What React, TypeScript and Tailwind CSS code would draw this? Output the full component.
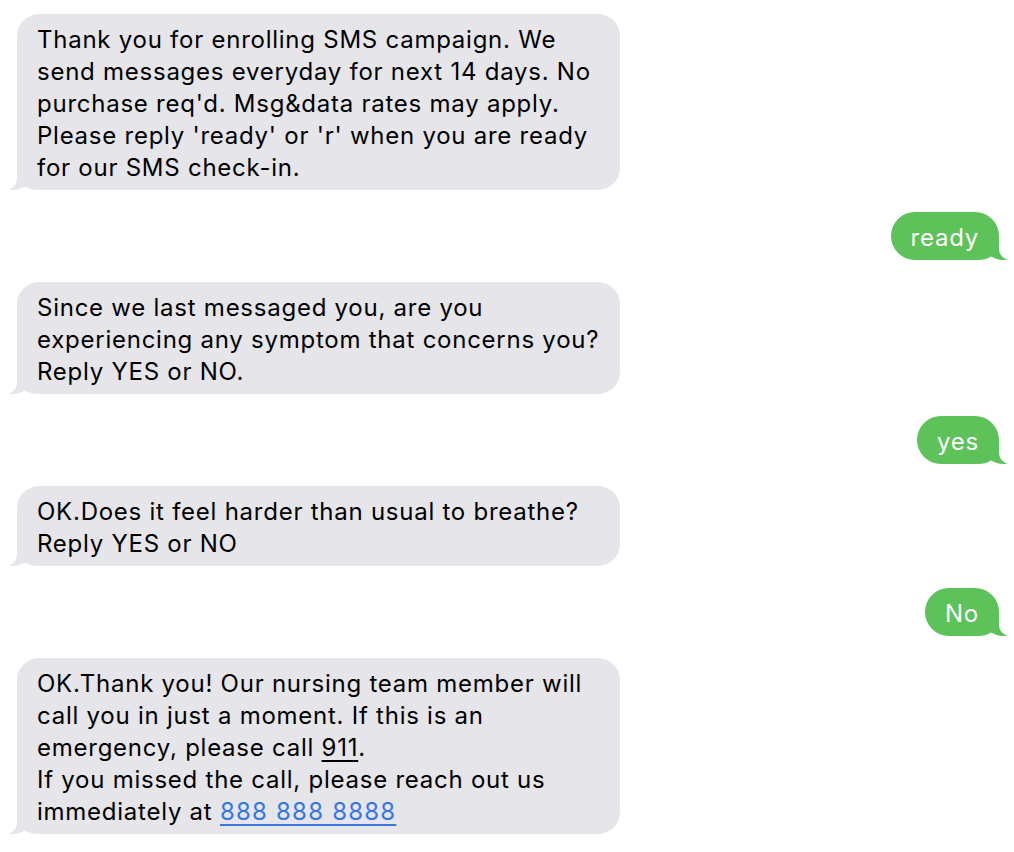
import React from "react";

const font = { fontFamily: "Inter, 'Noto Sans', sans-serif" };

function GrayTail() {
  return (
    <svg
      className="absolute left-[-9px] bottom-0"
      width="32"
      height="24"
      viewBox="0 0 32 24"
    >
      <path
        d="M9 0 L9 12 C9 18 6 22 0 23.6 C7 24.6 13 23 17 20.5 C20 23 25 24 32 24 L32 0 Z"
        fill="#e5e5ea"
      />
    </svg>
  );
}

function GreenTail() {
  return (
    <svg
      className="absolute right-[-9px] bottom-0"
      width="32"
      height="24"
      viewBox="0 0 32 24"
    >
      <path
        d="M23 0 L23 12 C23 18 26 22 32 23.6 C25 24.6 19 23 15 20.5 C12 23 7 24 0 24 L0 0 Z"
        fill="#5dc25a"
      />
    </svg>
  );
}

function Incoming({ children }: { children: React.ReactNode }) {
  return (
    <div className="relative ml-[17px] w-[603px] rounded-[22px] bg-[#e5e5ea] px-[20px] pt-[10px] pb-[6px] text-[24px] leading-[32px] tracking-[0.75px] text-black whitespace-nowrap">
      <GrayTail />
      <div className="relative">{children}</div>
    </div>
  );
}

function Outgoing({ children }: { children: React.ReactNode }) {
  return (
    <div className="relative mr-[15px] self-end rounded-[24px] bg-[#5dc25a] px-[20px] pt-[10px] pb-[6px] text-[24px] leading-[32px] tracking-[0.75px] text-white">
      <GreenTail />
      <div className="relative">{children}</div>
    </div>
  );
}

export default function App() {
  return (
    <div className="min-h-[852px] w-full bg-white" style={font}>
      <div className="flex flex-col gap-[22px] pt-[14px]">
        <Incoming>
          Thank you for enrolling SMS campaign. We
          <br />
          send messages everyday for next 14 days. No
          <br />
          purchase req'd. Msg&amp;data rates may apply.
          <br />
          Please reply 'ready' or 'r' when you are ready
          <br />
          for our SMS check-in.
        </Incoming>
        <Outgoing>ready</Outgoing>
        <Incoming>
          Since we last messaged you, are you
          <br />
          experiencing any symptom that concerns you?
          <br />
          Reply YES or NO.
        </Incoming>
        <Outgoing>yes</Outgoing>
        <Incoming>
          OK.Does it feel harder than usual to breathe?
          <br />
          Reply YES or NO
        </Incoming>
        <Outgoing>No</Outgoing>
        <Incoming>
          OK.Thank you! Our nursing team member will
          <br />
          call you in just a moment. If this is an
          <br />
          emergency, please call <span className="underline underline-offset-4">911</span>.
          <br />
          If you missed the call, please reach out us
          <br />
          immediately at{" "}
          <span className="text-[#3478e0] underline underline-offset-4 tracking-[1.2px]">888 888 8888</span>
        </Incoming>
      </div>
    </div>
  );
}
